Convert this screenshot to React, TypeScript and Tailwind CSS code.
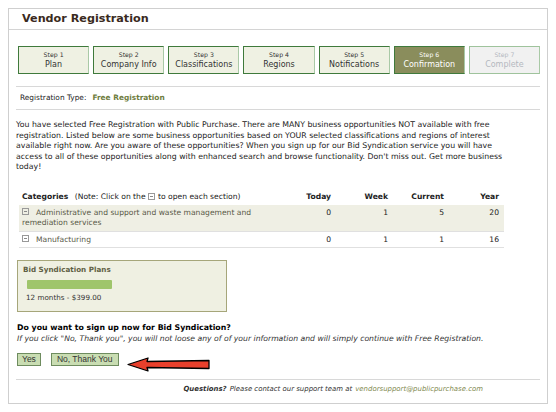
const steps = [
  { n: 1, label: "Plan", state: "done" },
  { n: 2, label: "Company Info", state: "done" },
  { n: 3, label: "Classifications", state: "done" },
  { n: 4, label: "Regions", state: "done" },
  { n: 5, label: "Notifications", state: "done" },
  { n: 6, label: "Confirmation", state: "active" },
  { n: 7, label: "Complete", state: "todo" },
];

const rows = [
  {
    name: "Administrative and support and waste management and remediation services",
    today: 0,
    week: 1,
    current: 5,
    year: 20,
    shaded: true,
  },
  { name: "Manufacturing", today: 0, week: 1, current: 1, year: 16, shaded: false },
];

function Expander({ gap = "mr-[7px]" }: { gap?: string }) {
  return (
    <span className={`inline-block w-[7px] h-[7px] border border-[#999] relative align-[-0.5px] ${gap}`}>
      <span className="absolute left-[1px] right-[1px] top-[2px] h-px bg-[#888]" />
    </span>
  );
}

function StepBox({ n, label, state }: { n: number; label: string; state: string }) {
  const box =
    state === "active"
      ? "bg-[#8a8d5c] border-[#3f7a3c] text-white"
      : state === "todo"
        ? "bg-[#f1f1f1] border-[#9fc39c] text-[#b4b8bf]"
        : "bg-[#eff1e3] border-[#3f7a3c] text-[#333]";
  return (
    <div
      className={`w-[72px] h-[28px] border border-r-[#a9c9a6] flex flex-col items-center justify-center leading-[10px] ${box}`}
    >
      <span className="text-[6.2px]">Step {n}</span>
      <span className="text-[8px]">{label}</span>
    </div>
  );
}

export default function App() {
  return (
    <div
      className="w-[556px] h-[412px] bg-white px-[8px] pt-[8px] pb-[8px] text-[#222]"
      style={{ fontFamily: '"DejaVu Sans", Verdana, sans-serif' }}
    >
      <div className="h-full border border-[#cfcfcf] flex flex-col">
        {/* Header */}
        <div className="h-[21px] border-b border-[#d4d4d4] px-[13px] flex items-center">
          <h1 className="text-[11.2px] font-bold text-[#3a2a20]">Vendor Registration</h1>
        </div>

        <div className="px-[7px] flex flex-col">
          {/* Steps */}
          <div className="flex gap-[4px] pl-[2px] mt-[16px]">
            {steps.map((s) => (
              <StepBox key={s.n} {...s} />
            ))}
          </div>

          <div className="h-px bg-[#d8d8d8] mt-[12px]" />
          <div className="h-[22px] flex items-center pl-[4px] text-[7.4px]">
            <span>Registration Type:</span>
            <span className="ml-[6px] font-bold text-[#6e7d3e]">Free Registration</span>
          </div>
          <div className="h-px bg-[#d8d8d8]" />

          {/* Intro paragraph */}
          <p className="mt-[10px] text-[7.8px] leading-[10.5px] whitespace-nowrap">
            You have selected Free Registration with Public Purchase. There are MANY business opportunities NOT available with free
            <br />
            registration. Listed below are some business opportunities based on YOUR selected classifications and regions of interest
            <br />
            available right now. Are you aware of these opportunities? When you sign up for our Bid Syndication service you will have
            <br />
            access to all of these opportunities along with enhanced search and browse functionality. Don't miss out. Get more business
            <br />
            today!
          </p>

          {/* Categories table */}
          <div className="mt-[17px] ml-[3px] w-[485px] text-[7.6px]">
            <div className="flex h-[15px] items-center font-bold">
              <div className="flex-1 pl-[3px] whitespace-nowrap">
                Categories{" "}
                <span className="font-normal ml-[4px]">
                  (Note: Click on the <Expander gap="mr-[3px]" />
                  to open each section)
                </span>
              </div>
              <div className="w-[50px] text-right">Today</div>
              <div className="w-[57px] text-right">Week</div>
              <div className="w-[56px] text-right">Current</div>
              <div className="w-[60px] text-right pr-[5px]">Year</div>
            </div>
            {rows.map((r) => (
              <div
                key={r.name}
                className={`flex border-b border-[#e0e0e0] text-[#5a5a48] ${r.shaded ? "bg-[#efefe4] h-[27px] pt-[3px]" : "h-[16px] pt-[3px]"}`}
              >
                <div className="flex-1 pl-[3px] leading-[10px] pr-[20px]">
                  <Expander />
                  {r.name}
                </div>
                <div className="w-[50px] text-right leading-[10px] text-[#222]">{r.today}</div>
                <div className="w-[57px] text-right leading-[10px] text-[#222]">{r.week}</div>
                <div className="w-[56px] text-right leading-[10px] text-[#222]">{r.current}</div>
                <div className="w-[60px] text-right leading-[10px] pr-[5px] text-[#222]">{r.year}</div>
              </div>
            ))}
          </div>

          {/* Plans */}
          <div className="mt-[12px] ml-[1px] w-[210px] h-[52px] border border-[#a6a67a] bg-[#eff0e2] px-[5px] pt-[4px] text-[7.2px]">
            <div className="font-bold text-[#5f5f45]">Bid Syndication Plans</div>
            <div className="mt-[5px] ml-[4px] w-[85px] h-[9px] bg-[#9fc56b] rounded-[1px]" />
            <div className="mt-[4px] ml-[3px] text-[#333]">12 months - $399.00</div>
          </div>

          {/* Question */}
          <div className="mt-[11px] ml-[1px] text-[7.8px] font-bold text-black leading-[10px]">Do you want to sign up now for Bid Syndication?</div>
          <div className="ml-[1px] text-[7.7px] italic text-[#333] leading-[11px] whitespace-nowrap">
            If you click "No, Thank you", you will not loose any of of your information and will simply continue with Free Registration.
          </div>

          {/* Buttons + arrow */}
          <div className="flex items-start mt-[9px] ml-[1px] h-[26px]">
            <button
              className="h-[13px] px-[4px] bg-[#c9ddb2] border border-[#6e8c5f] text-[8.5px] leading-[11px] text-[#333]"
              style={{ fontFamily: '"Liberation Sans", Arial, sans-serif' }}
            >
              Yes
            </button>
            <button
              className="ml-[10px] h-[13px] px-[5px] bg-[#c9ddb2] border border-[#6e8c5f] text-[8.5px] leading-[11px] text-[#333]"
              style={{ fontFamily: '"Liberation Sans", Arial, sans-serif' }}
            >
              No, Thank You
            </button>
            <svg className="ml-[8px] mt-[4px]" width="84" height="15" viewBox="0 0 84 15">
              <path
                d="M1 7.5 L21 1 L20 4.5 L82 3.5 L82 11.5 L20 10.5 L21 14 Z"
                fill="#e8402c"
                stroke="#000"
                strokeWidth="1.3"
                strokeLinejoin="round"
              />
            </svg>
          </div>

          <div className="h-px bg-[#d8d8d8]" />
          <div className="pt-[3px] h-[16px] flex items-center justify-end pr-[57px] text-[6.95px] italic text-[#333] whitespace-nowrap">
            <b className="mr-[3px]">Questions?</b>
            Please contact our support team at
            <span className="ml-[3px] text-[#7f8a4f]">vendorsupport@publicpurchase.com</span>
          </div>
        </div>
      </div>
    </div>
  );
}
